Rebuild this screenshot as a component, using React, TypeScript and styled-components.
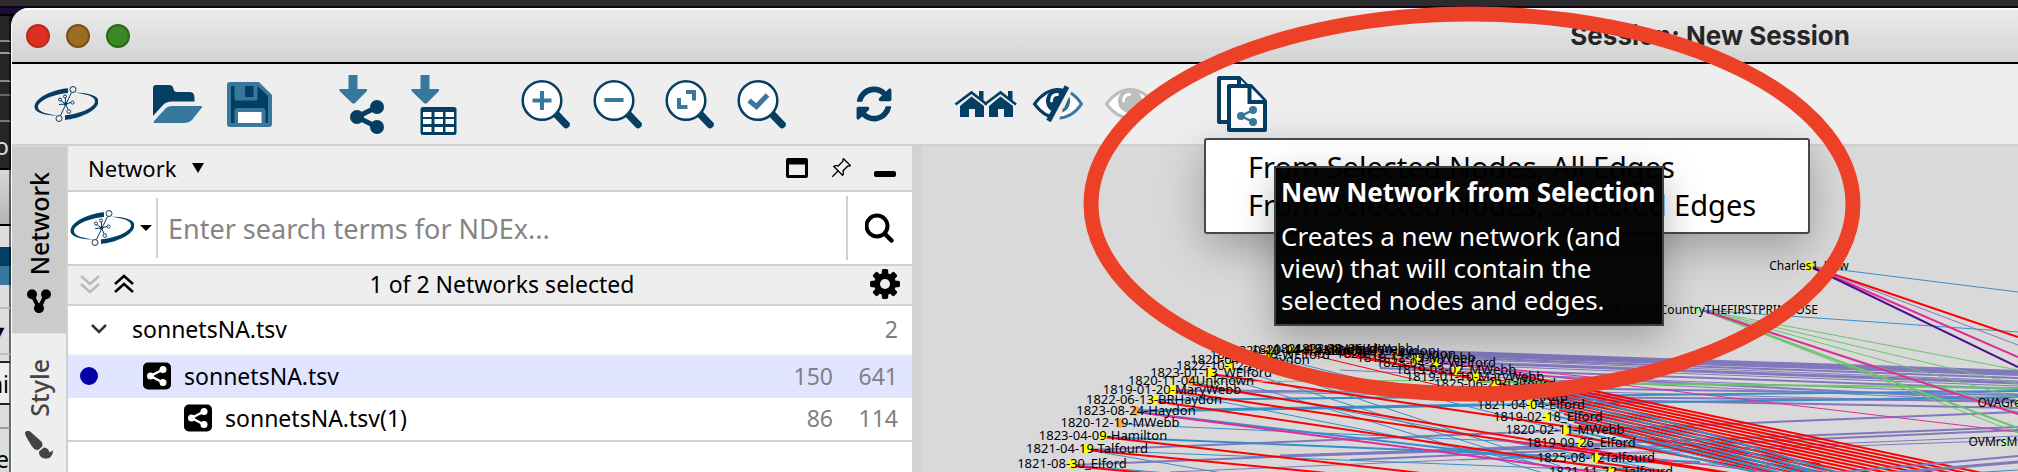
import React from "react";
import styled, { createGlobalStyle } from "styled-components";
import { FaSyncAlt, FaPaintBrush } from "react-icons/fa";
import { BsPinAngle } from "react-icons/bs";

const NAVY = "#053e63";
const BLUE = "#38789f";
const LINE = "#d0d0d0";

const GlobalStyle = createGlobalStyle`
  *, *::before, *::after { box-sizing: border-box; }
  body { margin: 0; background: #2b2b2b; font-family: "Noto Sans", sans-serif; color: #000; }
  button, input { font: inherit; color: inherit; }
`;

/* ---------- desktop behind the window ---------- */

const Desktop = styled.div`
  position: relative;
  height: 100vh;
  display: flex;
  flex-direction: column;
  overflow: hidden;
`;

const MenuBarEdge = styled.div`
  flex: none;
  height: 8px;
  background: #2b2b2b;
  border-bottom: 2px solid #0e0318;
`;

const DesktopRow = styled.div`
  flex: 1;
  min-height: 0;
  display: flex;
  background: linear-gradient(#1c0a38 0 6px, #000 6px 20px, #262626 20px);
`;

const BehindWindow = styled.div`
  flex: none;
  width: 11px;
  padding-top: 8px;
  display: flex;
  flex-direction: column;
  overflow: hidden;
`;

const Slice = styled.div<{ $h: number; $bg: string; $line?: string; $fg?: string }>`
  flex: none;
  height: ${(p) => p.$h}px;
  background: ${(p) => p.$bg};
  border-bottom: ${(p) => (p.$line ? `2px solid ${p.$line}` : "none")};
  border-right: 2px solid #0008;
  color: ${(p) => p.$fg ?? "#000"};
  font-size: 23px;
  line-height: ${(p) => p.$h}px;
  white-space: nowrap;
  overflow: hidden;
  display: flex;
  justify-content: flex-end;
`;

/* ---------- application window ---------- */

const Window = styled.div`
  flex: 1;
  min-width: 0;
  display: flex;
  flex-direction: column;
  background: #eee;
  border-left: 1px solid #fff;
  border-top-left-radius: 18px;
  overflow: hidden;
`;

const TitleBar = styled.header`
  flex: none;
  height: 56px;
  padding: 0 168px 0 14px;
  display: flex;
  align-items: center;
  gap: 16px;
  background: linear-gradient(#ebebeb, #d3d3d3);
  border-top: 2px solid #fbfbfb;
  border-bottom: 2px solid #000;
`;

const Light = styled.button<{ $fill: string; $edge: string }>`
  width: 24px;
  height: 24px;
  padding: 0;
  border: 2px solid ${(p) => p.$edge};
  border-radius: 50%;
  background: ${(p) => p.$fill};
`;

const Title = styled.h1`
  flex: 1;
  margin: 0;
  text-align: right;
  font: 700 26px/32px Inter, sans-serif;
  color: #262626;
`;

const ToolBar = styled.div`
  flex: none;
  height: 82px;
  padding-left: 18px;
  display: flex;
  align-items: center;
  gap: 40px;
  border-bottom: 2px solid ${LINE};
`;

const ToolGroup = styled.div`
  display: flex;
`;

const ToolButton = styled.button`
  width: 72px;
  height: 64px;
  padding: 0 4px;
  border: 0;
  background: none;
  display: flex;
  align-items: center;
  justify-content: center;
`;

const Body = styled.div`
  flex: 1;
  min-height: 0;
  display: flex;
`;

const SideRail = styled.nav`
  flex: none;
  width: 56px;
  display: flex;
  flex-direction: column;
  border-right: 2px solid ${LINE};
`;

const RailTab = styled.button<{ $active?: boolean }>`
  flex: none;
  padding: 20px 0 26px;
  border: 0;
  background: ${(p) => (p.$active ? "#cbcbcb" : "transparent")};
  color: ${(p) => (p.$active ? "#000" : "#444")};
  display: flex;
  align-items: center;
  gap: 14px;
  writing-mode: vertical-rl;
  transform: rotate(180deg);
  font-size: 25px;
  font-weight: 500;
  line-height: 54px;
`;

const Panel = styled.section`
  flex: none;
  width: 844px;
  display: flex;
  flex-direction: column;
  background: #fff;
  font-size: 23px;
  line-height: 32px;
`;

const PanelHeader = styled.div`
  height: 46px;
  padding: 0 5px 0 20px;
  display: flex;
  align-items: center;
  background: #eee;
  border-bottom: 2px solid ${LINE};
`;

const PlainButton = styled.button`
  padding: 0;
  border: 0;
  background: none;
  display: flex;
  align-items: center;
`;

const PanelPicker = styled(PlainButton)`
  gap: 15px;
  margin-right: auto;
  font-size: 22px;
`;

const HeaderActions = styled.div`
  display: flex;
`;

const HeaderAction = styled(PlainButton)`
  width: 44px;
  height: 44px;
  justify-content: center;
`;

const SearchRow = styled.form`
  height: 74px;
  display: flex;
  align-items: center;
  border-bottom: 2px solid ${LINE};
`;

const ProviderButton = styled(PlainButton)`
  width: 90px;
  height: 60px;
  padding-left: 2px;
  gap: 6px;
  border-right: 2px solid ${LINE};
`;

const SearchInput = styled.input`
  flex: 1;
  min-width: 0;
  height: 64px;
  padding: 0 10px;
  border: 0;
  border-right: 2px solid ${LINE};
  outline: 0;
  background: none;
  font-size: 27px;
  &::placeholder { color: #858585; opacity: 1; }
`;

const SearchButton = styled(PlainButton)`
  width: 64px;
  height: 64px;
  justify-content: center;
`;

const StatusRow = styled.div`
  height: 40px;
  padding: 0 12px 2px;
  display: flex;
  justify-content: space-between;
  align-items: center;
  background: #eee;
  border-bottom: 2px solid ${LINE};
`;

const FoldButtons = styled.div`
  display: flex;
  gap: 14px;
`;

const NetworkTable = styled.table`
  width: 100%;
  border-spacing: 0;
`;

const rowHeights = { group: 50, selected: 42, child: 44 };
const rowLines = { group: "2px solid #eee", selected: "0", child: `2px solid ${LINE}` };

const NetworkRow = styled.tr<{ $kind: "group" | "selected" | "child" }>`
  height: ${(p) => rowHeights[p.$kind]}px;
  background: ${(p) => (p.$kind === "selected" ? "#e0e4ff" : "transparent")};
  & > td { border-bottom: ${(p) => rowLines[p.$kind]}; }
`;

const NameCell = styled.td`
  padding: 0 0 2px;
`;

const NameLine = styled.div<{ $indent: number; $gap: number }>`
  padding-left: ${(p) => p.$indent}px;
  display: flex;
  align-items: center;
  gap: ${(p) => p.$gap}px;
`;

const CountCell = styled.td`
  width: 65px;
  padding: 0 14px 2px 0;
  text-align: right;
  color: #808080;
`;

const ActiveDot = styled.span`
  width: 18px;
  height: 18px;
  margin-right: 32px;
  border-radius: 50%;
  background: #0000a4;
`;

const Splitter = styled.div`
  flex: none;
  width: 10px;
  background: #d2d2d2;
`;

const Canvas = styled.main`
  flex: 1;
  min-width: 0;
  background: #d9d9d9;
`;

const GraphSvg = styled.svg`
  display: block;
  width: 100%;
  height: 100%;
`;

/* ---------- things that lie over the window ---------- */

const PopupMenu = styled.div`
  position: absolute;
  left: 1204px;
  top: 138px;
  width: 606px;
  padding: 8px 0;
  border: 2px solid #484848;
  border-radius: 3px;
  background: #fff;
  box-shadow: 0 14px 44px #00000047;
`;

const MenuItem = styled.button`
  display: block;
  width: 100%;
  padding: 0 0 0 42px;
  border: 0;
  background: none;
  text-align: left;
  font-size: 29px;
  line-height: 38px;
`;

const Tooltip = styled.div`
  position: absolute;
  left: 1274px;
  top: 166px;
  width: 390px;
  padding: 8px 5px;
  border: 2px solid #404040;
  background: #000000f8;
  color: #fff;
  box-shadow: 0 12px 36px #00000047;
  font-size: 26px;
  line-height: 32px;
`;

const TooltipTitle = styled.strong`
  display: block;
  margin-bottom: 12px;
  white-space: nowrap;
`;

const TooltipText = styled.p`
  margin: 0;
`;

const Ring = styled.svg`
  position: absolute;
  left: 1083px;
  top: 6px;
  pointer-events: none;
`;

/* ---------- icons ---------- */

const LogoIcon = () => {
  const arc =
    "M34 16.200 C18 17.600 0.500 26 0.500 35 C0.500 41 12 43.500 24 43.500 C13 42.300 4 40 4 35 C4 29 18 22.400 34 21 Z";
  return (
    <svg width="64" height="64" viewBox="0 0 64 64">
      <path d={arc} fill={NAVY} />
      <path d={arc} fill={NAVY} transform="rotate(180 32.500 32.100)" />
      <g fill="none" stroke={NAVY} strokeWidth="1">
        <path d="M37.500 20.500 L26.500 43.500 M31.500 32 L27 28.500 M31.500 32 L31.500 26 M31.500 32 L37 30.500 M31.500 32 L25 32.500 M31.500 32 L34 37.500" />
        <circle cx="39" cy="17.500" r="3" />
        <circle cx="25" cy="46.500" r="3" />
        <circle cx="26" cy="27.500" r="1.500" />
        <circle cx="31" cy="24.500" r="1.500" />
        <circle cx="38.500" cy="30.500" r="1.600" />
        <circle cx="34.800" cy="39.500" r="1.800" />
      </g>
      <circle cx="31.500" cy="32" r="1.800" fill={NAVY} />
    </svg>
  );
};

const OpenIcon = () => (
  <svg width="64" height="64" viewBox="0 0 64 64">
    <path
      fill={NAVY}
      d="M7 44 V16 Q7 13 10 13 H23 Q27 13 27.500 17 Q28 20 31 20 H44 Q48.500 20 48.500 26 V29.500 H26 Q20 29.500 17 33 Z"
    />
    <path fill={BLUE} d="M8 49 L20 36 Q22.500 34 26 34 H55 Q57 34 55.500 36 L46 48 Q43 51 39 51 H9 Q7 51 8 49 Z" />
  </svg>
);

const SaveIcon = () => (
  <svg width="64" height="64" viewBox="0 0 64 64">
    <path fill={BLUE} d="M9 13 Q9 10 12 10 H41 L54 23 V52 Q54 55 51 55 H12 Q9 55 9 52 Z" />
    <path
      fill={NAVY}
      d="M13 14 H16.500 V26 Q16.500 28.500 19 28.500 H37 Q39.500 28.500 39.500 26 V14 L50 24 V51 H47.500 V39 Q47.500 36 44 36 H20 Q16.500 36 16.500 39 V51 H13 Z"
    />
    <rect x="27" y="14" width="8.500" height="11" fill={NAVY} />
    <rect x="20" y="40" width="23.500" height="11" fill="#fff" />
  </svg>
);

const DownArrow = () => <path fill={BLUE} d="M18.500 3 H27.500 V17 H37 V19 L24.500 31.500 H22.500 L9.500 19 V17 H18.500 Z" />;

const ImportNetworkIcon = () => (
  <svg width="64" height="64" viewBox="0 0 64 64">
    <DownArrow />
    <path d="M47 35 L27 45 L47 55" fill="none" stroke={NAVY} strokeWidth="5" />
    <g fill={NAVY}>
      <circle cx="47" cy="35" r="7" />
      <circle cx="27" cy="45" r="7" />
      <circle cx="47" cy="55" r="7" />
    </g>
  </svg>
);

const ImportTableIcon = () => (
  <svg width="64" height="64" viewBox="0 0 64 64">
    <DownArrow />
    <rect x="18.500" y="35" width="36" height="28" rx="2.500" fill={NAVY} />
    <g fill="#fff">
      {[21, 32.5, 43.5].map((x) =>
        [40, 47, 55].map((y) => <rect key={`${x}-${y}`} x={x} y={y} width="8.500" height="5" />)
      )}
    </g>
  </svg>
);

const LensIcon = ({ children }: { children: React.ReactNode }) => (
  <svg width="64" height="64" viewBox="0 0 64 64">
    <path d="M42 42 L52 52.500" stroke={NAVY} strokeWidth="7.500" strokeLinecap="round" />
    <circle cx="28" cy="28.500" r="19.300" fill="#fff" stroke={NAVY} strokeWidth="2.500" />
    <g fill="none" stroke={BLUE} strokeWidth="4">
      {children}
    </g>
  </svg>
);

const HomesIcon = () => (
  <svg width="64" height="64" viewBox="0 0 64 64">
    {[0, 29].map((dx) => (
      <g key={dx} transform={`translate(${dx} 0)`}>
        <path fill={NAVY} d="M6 34 L17.500 24.500 L30 34 V45 H21 V37 H15 V45 H6 Z" />
        <path fill={NAVY} d="M25 19 H29.500 V29 L25 25 Z" />
        <path fill="none" stroke={NAVY} strokeWidth="2.600" d="M1.500 32.500 L17.500 20.500 L33 32.500" />
      </g>
    ))}
  </svg>
);

const EyeShape = ({ color, right }: { color: string; right: string }) => (
  <>
    <path fill="#fff" d="M8 32 Q20 17 32 17 Q44 17 56 32 Q44 47 32 47 Q20 47 8 32 Z" />
    <circle cx="32" cy="29" r="12" fill={color} />
    <path fill="none" stroke="#fff" strokeWidth="2.800" strokeLinecap="round" d="M25.500 29 Q25.500 22.500 31.500 22.500" />
    <path fill="none" stroke={color} strokeWidth="3" d="M32 17.500 Q19 17.500 8.500 32 Q19 46 32 46" />
    <path fill="none" stroke={right} strokeWidth="3" d="M32 46 Q46 46 55.500 32 Q46 17.500 32 17.500" />
  </>
);

const HideIcon = () => (
  <svg width="64" height="64" viewBox="0 0 64 64">
    <EyeShape color={NAVY} right={BLUE} />
    <path fill="#eee" d="M41 12 L48 14 L32 50 L24 50 Z" />
    <path fill="none" stroke={NAVY} strokeWidth="3" d="M30 17.500 L40 19" />
    <path fill="none" stroke={BLUE} strokeWidth="2" d="M43 27 Q43 34 36.500 38.500" />
    <path stroke={NAVY} strokeWidth="5" d="M41 14.500 L22.500 49" />
  </svg>
);

const ShowIcon = () => (
  <svg width="64" height="64" viewBox="0 0 64 64">
    <EyeShape color="#bdbdbd" right="#bdbdbd" />
  </svg>
);

const NewFromSelectionIcon = () => (
  <svg width="64" height="64" viewBox="0 0 64 64">
    <g fill="#fff" stroke={NAVY} strokeWidth="4" strokeLinejoin="round">
      <path d="M9 6 H29 L37 14 V50 H9 Z" />
      <path d="M29 6 V14 H37" />
      <path d="M19 14 H41 L55 29 V58 H19 Z" />
      <path d="M39.500 14 V30 H55" strokeLinejoin="miter" />
    </g>
    <path d="M43 38 L31 44 L43 50" fill="none" stroke={BLUE} strokeWidth="2.500" />
    <g fill={BLUE}>
      <circle cx="43" cy="38" r="4" />
      <circle cx="31" cy="44" r="4" />
      <circle cx="43" cy="50" r="4" />
    </g>
  </svg>
);

const NetworkBadge = () => (
  <svg width="28" height="28" viewBox="0 0 28 28">
    <rect x="0" y="0.500" width="28" height="27" rx="5" />
    <path d="M20 7.500 L7.500 14 L20 20.500" fill="none" stroke="#fff" strokeWidth="2.500" />
    <g fill="#fff">
      <circle cx="20" cy="7.500" r="3.500" />
      <circle cx="7.500" cy="14" r="3.500" />
      <circle cx="20" cy="20.500" r="3.500" />
    </g>
  </svg>
);

const NetworkTabIcon = () => (
  <svg width="24" height="24" viewBox="0 0 24 24">
    <path d="M5 19 L12 5 L19 19" fill="none" stroke="currentColor" strokeWidth="4" />
    <circle cx="5" cy="19" r="5" />
    <circle cx="12" cy="5" r="5" />
    <circle cx="19" cy="19" r="5" />
  </svg>
);

const StyleTabIcon = styled(FaPaintBrush)`
  width: 28px;
  height: 28px;
  transform: rotate(180deg) scaleX(-1);
`;

const RefreshIcon = styled(FaSyncAlt)`
  width: 36px;
  height: 36px;
  color: ${NAVY};
`;

const PinIcon = styled(BsPinAngle)`
  width: 22px;
  height: 22px;
`;

const Caret = ({ w, h }: { w: number; h: number }) => (
  <svg width={w} height={h} viewBox={`0 0 ${w} ${h}`}>
    <path d={`M0 0 H${w} L${w / 2} ${h} Z`} />
  </svg>
);

const DoubleChevron = ({ up, color }: { up?: boolean; color: string }) => (
  <svg width="20" height="20" viewBox="0 0 20 20">
    <path
      d="M1 2 L10 10 L19 2 M1 10 L10 18 L19 10"
      fill="none"
      stroke={color}
      strokeWidth="2.500"
      transform={up ? "rotate(180 10 10)" : undefined}
    />
  </svg>
);

const GearIcon = () => (
  <svg width="30" height="30" viewBox="0 0 30 30">
    {[0, 45, 90, 135].map((a) => (
      <rect key={a} x="11.800" y="0" width="6.400" height="30" rx="1.800" transform={`rotate(${a} 15 15)`} />
    ))}
    <circle cx="15" cy="15" r="11" />
    <circle cx="15" cy="15" r="5" fill="#eee" />
  </svg>
);

/* ---------- network view ---------- */

// colour, stroke width, x1, y1, x2, y2
type Edge = [string, number, number, number, number, number];
const RED = "#ff0000";
const SKY = "#3a8ec8";
const LILAC = "#8279bd";
const PINK = "#e22a9a";
const GREEN = "#6cc46c";
const VIOLET = "#4a1090";

const redFan: Edge[] = Array.from({ length: 14 }, (_, i) => [
  RED, 2, 1514 + i * 5, 374 + i * 4, 2020 - i * 16, 481,
]);
const skyFan: Edge[] = Array.from({ length: 9 }, (_, i) => [
  SKY, i % 2 ? 1 : 2, 1500 + i * 8, 372 + i * 7, 1870 - i * 9, 482,
]);

const edges: Edge[] = [
  [LILAC, 6, 1340, 350, 2018, 373],
  [LILAC, 2, 1380, 355, 2018, 378], [LILAC, 1, 1400, 357, 2018, 381], [LILAC, 3, 1420, 361, 2018, 383],
  [LILAC, 1, 1430, 364, 2018, 386], [LILAC, 2, 1400, 367, 2018, 389], [LILAC, 1, 1440, 372, 2018, 394],
  [LILAC, 2, 1380, 368, 2018, 400], [LILAC, 2, 1340, 385, 2018, 395], [LILAC, 1, 1440, 388, 2018, 403],
  [LILAC, 2, 1440, 396, 2018, 401], [LILAC, 2, 1500, 398, 2018, 408], [LILAC, 1, 1340, 370, 2018, 402],
  [LILAC, 2, 1172, 390, 1600, 394], [LILAC, 1, 1172, 391, 1600, 398],
  [LILAC, 2, 1087, 450, 2018, 412], [LILAC, 2, 1072, 465, 2018, 427], [LILAC, 1, 1170, 472, 2018, 436],
  [LILAC, 2, 1350, 460, 2018, 430], [LILAC, 1, 1460, 460, 2018, 440], [LILAC, 3, 1280, 456, 1600, 446],
  [SKY, 2, 1154, 400, 2018, 391], [SKY, 3, 1136, 411, 1480, 405], [SKY, 2, 1480, 405, 2018, 397],
  [SKY, 1, 1248, 362, 1560, 466], [SKY, 1, 1230, 367, 1600, 484], [SKY, 1, 1269, 356, 1600, 440],
  [SKY, 2, 1136, 412, 1700, 478], [SKY, 1, 1119, 424, 1700, 450], [SKY, 1, 1211, 374, 1560, 478],
  [SKY, 2, 1103, 437, 1700, 462], [SKY, 1, 1087, 450, 1700, 474], [SKY, 1, 1072, 465, 1250, 480],
  [SKY, 1, 1172, 392, 1640, 484], [SKY, 1, 1191, 382, 1660, 470], [SKY, 1, 1087, 450, 1240, 476],
  [SKY, 2, 1640, 440, 1880, 484], [SKY, 1, 1620, 462, 1800, 466],
  [RED, 2, 1211, 374, 1820, 464], [RED, 2, 1172, 391, 1720, 472], [RED, 2, 1154, 401, 1700, 482],
  [RED, 2, 1103, 437, 1500, 482], [RED, 2, 1087, 450, 1400, 480], [RED, 2, 1072, 466, 1200, 478],
  [RED, 1, 1291, 350, 1500, 400], [RED, 1, 1311, 350, 1480, 379], [RED, 2, 1333, 351, 1560, 396],
  [RED, 1, 1354, 351, 1530, 386], [RED, 2, 1191, 384, 1760, 478],
  [RED, 2, 1595, 462, 1720, 480], [RED, 2, 1565, 434, 1780, 474],
  [PINK, 2, 1136, 412, 1640, 478], [PINK, 1, 1430, 362, 2018, 432], [PINK, 1, 1333, 352, 1600, 378],
  [PINK, 1, 1500, 440, 1800, 476],
  ...redFan,
  ...skyFan,
  [LILAC, 3, 1760, 484, 2018, 462], [LILAC, 2, 1800, 476, 2018, 456], [SKY, 1, 1820, 482, 2018, 470],
  [GREEN, 1, 1191, 382, 1480, 380], [GREEN, 2, 1480, 382, 2018, 388],
  [GREEN, 1, 1702, 310, 2018, 370], [GREEN, 1, 1702, 310, 2018, 384], [GREEN, 1, 1702, 310, 2018, 398],
  [GREEN, 1, 1702, 310, 2018, 412], [GREEN, 2, 1702, 310, 2018, 428], [GREEN, 1, 1702, 310, 2018, 433],
  [PINK, 2, 1702, 310, 2018, 414], [SKY, 1, 1702, 310, 2018, 332],
  [SKY, 1, 1809, 266, 2018, 292], [RED, 2, 1809, 266, 2018, 337], [LILAC, 1, 1809, 266, 2018, 345],
  [PINK, 2, 1809, 266, 2018, 357], [VIOLET, 2, 1809, 266, 2018, 367],
];

const Y = "#ffff00";
const O = "#ffa63d";
const G = "#b6f2b0";
type Node = [string, number, number, string];

const letters: Node[] = [
  ["1821-08-30_Elford", 1072, 468, Y],
  ["1821-04-19-Talfourd", 1087, 453, Y],
  ["1823-04-09-Hamilton", 1103, 440, Y],
  ["1820-12-19-MWebb", 1120, 427, O],
  ["1823-08-24-Haydon", 1136, 415, O],
  ["1822-06-13-BRHaydon", 1154, 404, Y],
  ["1819-01-20-MaryWebb", 1172, 394, Y],
  ["1820-11-04Unknown", 1191, 385, O],
  ["1823-01-13_WElford", 1211, 377, Y],
  ["1822-10-12-Elford", 1230, 370, Y],
  ["1820-04-22-Haydon", 1250, 364, Y],
  ["1821-10-16-WElford", 1270, 359, Y],
  ["1820-10-14-Haydon", 1291, 355, Y],
  ["1820-04-11-MWebb", 1311, 354, O],
  ["1821-12-08-Haydon", 1333, 353, O],
  ["1822-11-06-MWebb", 1354, 353, O],
  ["1820-09-05-Haydon", 1376, 355, O],
  ["1823-12-14-Haydon", 1396, 358, O],
  ["1819-12-13-MWebb", 1416, 362, Y],
  ["1823-04-29-WElford", 1436, 367, Y],
  ["1819-03-02_MWebb", 1456, 374, Y],
  ["1819-01-10-MaryWebb", 1475, 381, Y],
  ["1825-06-29-Talfourd", 1495, 388, Y],
  ["1819-11-09-Elford", 1514, 401, Y],
  ["1821-04-04-Elford", 1531, 409, Y],
  ["1819-02-18_Elford", 1548, 421, Y],
  ["1820-02-11-MWebb", 1565, 434, Y],
  ["1819-09-26_Elford", 1581, 447, Y],
  ["1825-08-12Talfourd", 1596, 462, Y],
  ["1821-11-22_Talfourd", 1611, 476, Y],
];

const works: Node[] = [
  ["Charles1_New", 1809, 270, Y],
  ["OVWalksInTheCountryTHEFIRSTPRIMROSE", 1698, 314, G],
  ["OVAGreatFrost", 2019, 407, G],
  ["OVMrsMoore", 2006, 446, G],
];

const NodeGroup = ({ items, size }: { items: Node[]; size: number }) => (
  <g fontSize={size} textAnchor="middle">
    {items.map(([label, x, y, c]) => (
      <ellipse key={label} cx={x} cy={y - 4} rx="4" ry="5" fill={c} />
    ))}
    {items.map(([label, x, y]) => (
      <text key={label} x={x} y={y}>
        {label}
      </text>
    ))}
  </g>
);

const NetworkGraph = () => (
  <GraphSvg role="img" aria-label="Network view">
    <g transform="translate(-922 -146)">
      {edges.map(([c, w, x1, y1, x2, y2], i) => (
        <line key={i} x1={x1} y1={y1} x2={x2} y2={y2} stroke={c} strokeWidth={w} />
      ))}
      <NodeGroup items={letters} size={13} />
      <NodeGroup items={works} size={12} />
    </g>
  </GraphSvg>
);

/* ---------- page ---------- */

export default function App() {
  return (
    <Desktop>
      <GlobalStyle />
      <MenuBarEdge />
      <DesktopRow>
        <BehindWindow aria-hidden="true">
          <Slice $h={26} $bg="#262626" $line="#888" />
          <Slice $h={12} $bg="#262626" $line="#999" />
          <Slice $h={28} $bg="#262626" $line="#888" />
          <Slice $h={14} $bg="#262626" $line="#666" />
          <Slice $h={26} $bg="#262626" $line="#777" />
          <Slice $h={48} $bg="#262626" $line="#000" $fg="#ddd">o</Slice>
          <Slice $h={56} $bg="linear-gradient(#d8d8d8, #b4b4b4)" $line="#000" />
          <Slice $h={21} $bg="#ddd" />
          <Slice $h={38} $bg="linear-gradient(#053e63 50%, #38789f 50%)" />
          <Slice $h={24} $bg="#ddd" $line="#bbb" />
          <Slice $h={46} $bg="#ddd" $line="#bbb">▼</Slice>
          <Slice $h={8} $bg="#ddd" $line="#222" />
          <Slice $h={42} $bg="#eee" $line="#222">ai</Slice>
          <Slice $h={24} $bg="#ddd" $line="#999" />
          <Slice $h={60} $bg="#ddd">e</Slice>
        </BehindWindow>
        <Window>
          <TitleBar>
            <Light aria-label="Close" $fill="#de2f23" $edge="#b9291f" />
            <Light aria-label="Minimize" $fill="#9b6d23" $edge="#7a4f18" />
            <Light aria-label="Zoom" $fill="#3c8726" $edge="#2c681b" />
            <Title>Session: New Session</Title>
          </TitleBar>
          <ToolBar role="toolbar">
            <ToolGroup>
              <ToolButton aria-label="Home"><LogoIcon /></ToolButton>
            </ToolGroup>
            <ToolGroup>
              <ToolButton aria-label="Open session"><OpenIcon /></ToolButton>
              <ToolButton aria-label="Save session"><SaveIcon /></ToolButton>
            </ToolGroup>
            <ToolGroup>
              <ToolButton aria-label="Import network"><ImportNetworkIcon /></ToolButton>
              <ToolButton aria-label="Import table"><ImportTableIcon /></ToolButton>
            </ToolGroup>
            <ToolGroup>
              <ToolButton aria-label="Zoom in">
                <LensIcon><path d="M18.500 28.500 H37.500 M28 19 V38" /></LensIcon>
              </ToolButton>
              <ToolButton aria-label="Zoom out">
                <LensIcon><path d="M18.500 28 H37.500" /></LensIcon>
              </ToolButton>
              <ToolButton aria-label="Fit content">
                <LensIcon><path d="M28 20 H36 V28.500 M21 26 V35 H29.500" /></LensIcon>
              </ToolButton>
              <ToolButton aria-label="Fit selected">
                <LensIcon><path strokeWidth="5" d="M19 28.500 L26.500 34.500 L37.500 23" /></LensIcon>
              </ToolButton>
            </ToolGroup>
            <ToolGroup>
              <ToolButton aria-label="Refresh"><RefreshIcon /></ToolButton>
            </ToolGroup>
            <ToolGroup>
              <ToolButton aria-label="First neighbors"><HomesIcon /></ToolButton>
              <ToolButton aria-label="Hide selected"><HideIcon /></ToolButton>
              <ToolButton aria-label="Show all"><ShowIcon /></ToolButton>
            </ToolGroup>
            <ToolGroup>
              <ToolButton aria-label="New network from selection"><NewFromSelectionIcon /></ToolButton>
            </ToolGroup>
          </ToolBar>
          <Body>
            <SideRail>
              <RailTab $active><NetworkTabIcon />Network</RailTab>
              <RailTab><StyleTabIcon />Style</RailTab>
            </SideRail>
            <Panel>
              <PanelHeader>
                <PanelPicker>Network <Caret w={12} h={10} /></PanelPicker>
                <HeaderActions>
                  <HeaderAction aria-label="Float">
                    <svg width="22" height="20" viewBox="0 0 22 20">
                      <path fillRule="evenodd" d="M2 0 H20 Q22 0 22 2 V18 Q22 20 20 20 H2 Q0 20 0 18 V2 Q0 0 2 0 Z M3 6.500 V17 H19 V6.500 Z" />
                    </svg>
                  </HeaderAction>
                  <HeaderAction aria-label="Pin"><PinIcon /></HeaderAction>
                  <HeaderAction aria-label="Minimize panel">
                    <svg width="22" height="20" viewBox="0 0 22 20">
                      <rect y="13" width="22" height="6" rx="2" />
                    </svg>
                  </HeaderAction>
                </HeaderActions>
              </PanelHeader>
              <SearchRow>
                <ProviderButton type="button" aria-label="Search provider">
                  <LogoIcon />
                  <Caret w={12} h={6} />
                </ProviderButton>
                <SearchInput aria-label="Search NDEx" placeholder="Enter search terms for NDEx..." />
                <SearchButton type="button" aria-label="Search">
                  <svg width="30" height="30" viewBox="0 0 30 30" fill="none" stroke="#000">
                    <circle cx="12" cy="13" r="10.500" strokeWidth="4" />
                    <path d="M20 21 L26.500 27.500" strokeWidth="4.500" strokeLinecap="round" />
                  </svg>
                </SearchButton>
              </SearchRow>
              <StatusRow>
                <FoldButtons>
                  <PlainButton aria-label="Expand all"><DoubleChevron color="#bbb" /></PlainButton>
                  <PlainButton aria-label="Collapse all"><DoubleChevron up color="#000" /></PlainButton>
                </FoldButtons>
                <span>1 of 2 Networks selected</span>
                <PlainButton aria-label="Settings"><GearIcon /></PlainButton>
              </StatusRow>
              <NetworkTable>
                <tbody>
                  <NetworkRow $kind="group">
                    <NameCell>
                      <NameLine $indent={23} $gap={25}>
                        <svg width="16" height="12" viewBox="0 0 16 12">
                          <path d="M1 2 L8 9 L15 2" fill="none" stroke="#333" strokeWidth="2.500" />
                        </svg>
                        sonnetsNA.tsv
                      </NameLine>
                    </NameCell>
                    <CountCell />
                    <CountCell>2</CountCell>
                  </NetworkRow>
                  <NetworkRow $kind="selected">
                    <NameCell>
                      <NameLine $indent={12} $gap={13}>
                        <ActiveDot />
                        <NetworkBadge />
                        sonnetsNA.tsv
                      </NameLine>
                    </NameCell>
                    <CountCell>150</CountCell>
                    <CountCell>641</CountCell>
                  </NetworkRow>
                  <NetworkRow $kind="child">
                    <NameCell>
                      <NameLine $indent={116} $gap={13}>
                        <NetworkBadge />
                        sonnetsNA.tsv(1)
                      </NameLine>
                    </NameCell>
                    <CountCell>86</CountCell>
                    <CountCell>114</CountCell>
                  </NetworkRow>
                </tbody>
              </NetworkTable>
            </Panel>
            <Splitter />
            <Canvas>
              <NetworkGraph />
            </Canvas>
          </Body>
        </Window>
      </DesktopRow>
      <PopupMenu role="menu">
        <MenuItem role="menuitem">From Selected Nodes, All Edges</MenuItem>
        <MenuItem role="menuitem">From Selected Nodes, Selected Edges</MenuItem>
      </PopupMenu>
      <Tooltip role="tooltip">
        <TooltipTitle>New Network from Selection</TooltipTitle>
        <TooltipText>Creates a new network (and view) that will contain the selected nodes and edges.</TooltipText>
      </Tooltip>
      <Ring width="778" height="396" viewBox="0 0 778 396" aria-hidden="true">
        <ellipse cx="389" cy="198" rx="381" ry="190" fill="none" stroke="#ec4127" strokeWidth="15" />
      </Ring>
    </Desktop>
  );
}
